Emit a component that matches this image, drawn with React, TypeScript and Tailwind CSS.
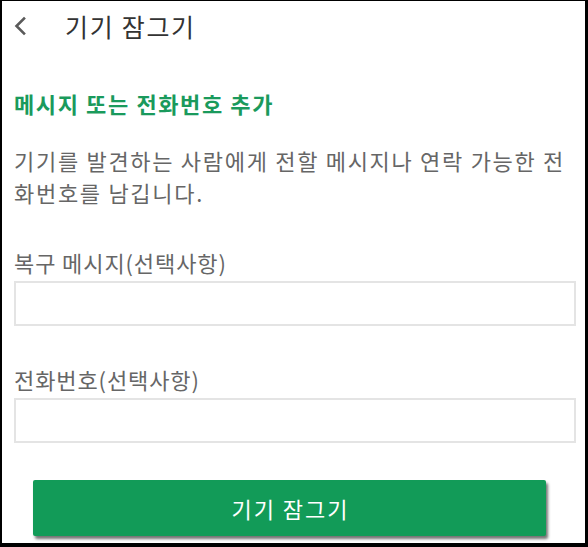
const font = { fontFamily: '"Noto Sans CJK KR", "Noto Sans", sans-serif' };

function BackIcon() {
  return (
    <svg width="16" height="20" viewBox="0 0 16 20" className="shrink-0">
      <polyline
        points="11,2.5 3.5,10 11,17.5"
        fill="none"
        stroke="#5a5a5a"
        strokeWidth="2.6"
        strokeLinecap="square"
      />
    </svg>
  );
}

function Field({ label, className }: { label: string; className: string }) {
  return (
    <div className={className}>
      <p className="text-[22px] leading-[32px] tracking-[0.9px] text-[#666]">{label}</p>
      <input
        type="text"
        className="mt-[3px] block h-[45px] w-full border-2 border-[#e4e4e4] bg-white outline-none"
      />
    </div>
  );
}

export default function App() {
  return (
    <div
      className="h-[547px] w-[588px] border-b-4 border-l-2 border-r-[3px] border-t border-black bg-white"
      style={font}
    >
      <header className="flex h-[50px] items-center pl-[11px]">
        <BackIcon />
        <h1 className="ml-[36px] text-[25px] leading-[32px] tracking-[1.7px] text-[#333]">
          기기 잠그기
        </h1>
      </header>

      <main className="pl-3 pr-[9px]">
        <h2 className="mt-[36px] text-[22px] font-bold leading-[32px] tracking-[1.6px] text-[#1a9a5c]">
          메시지 또는 전화번호 추가
        </h2>
        <p className="mt-[25px] text-[22px] leading-[32px] tracking-[1.7px] text-[#666]">
          기기를 발견하는 사람에게 전할 메시지나 연락 가능한 전화번호를 남깁니다.
        </p>

        <Field label="복구 메시지(선택사항)" className="mt-[38px]" />
        <Field label="전화번호(선택사항)" className="mt-[37px]" />

        <button
          type="button"
          className="ml-[19px] mt-[37px] flex h-[56px] w-[513px] items-center justify-center rounded-[2px] bg-[#129b58] pl-[2px] text-[22px] tracking-[2px] text-white shadow-[2px_3px_3px_rgba(0,0,0,0.55)]"
        >
          기기 잠그기
        </button>
      </main>
    </div>
  );
}
